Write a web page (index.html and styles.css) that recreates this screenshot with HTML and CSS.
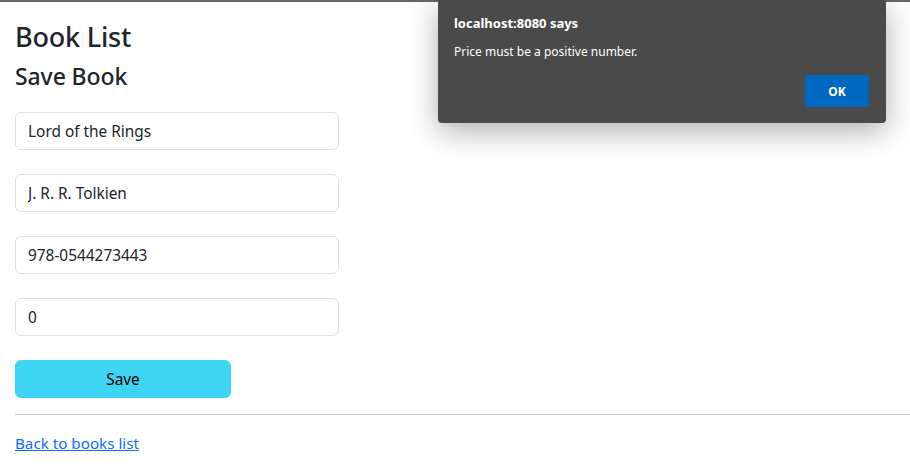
FILE: index.html
```html
<!DOCTYPE html>
<html>
<head>
<meta charset="utf-8">
<link rel="stylesheet" href="styles.css">
</head>
<body>
<div class="topline"></div>
<div class="page">
  <h1 class="title">Book List</h1>
  <h2 class="subtitle">Save Book</h2>
  <form class="form">
    <input class="field" type="text" value="Lord of the Rings">
    <input class="field" type="text" value="J. R. R. Tolkien">
    <input class="field" type="text" value="978-0544273443">
    <input class="field" type="text" value="0">
    <button class="save" type="button">Save</button>
  </form>
  <hr class="rule">
  <a class="back" href="#">Back to books list</a>
</div>
<div class="dialog">
  <div class="dialog-title">localhost:8080 says</div>
  <div class="dialog-msg">Price must be a positive number.</div>
  <div class="dialog-actions"><button class="ok" type="button">OK</button></div>
</div>
</body>
</html>
```
FILE: styles.css
```css
html, body { margin: 0; padding: 0; background: #fff; }
body { font-family: "Noto Sans", "Open Sans", sans-serif; color: #212529; }
.topline { height: 2px; background: #666; }
.page { padding: 0 0 0 15px; display: flex; flex-direction: column; }
.title { font-size: 27px; font-weight: 500; margin: 18px 0 0; line-height: 34px; letter-spacing: -0.2px; }
.subtitle { font-size: 23px; font-weight: 500; margin: 8px 0 0; line-height: 28px; letter-spacing: -0.1px; }
.form { display: flex; flex-direction: column; gap: 24px; margin-top: 22px; align-items: flex-start; }
.field { box-sizing: border-box; width: 324px; height: 38px; border: 1px solid #dee2e6; border-radius: 6px; padding: 0 12px; font: inherit; font-size: 15.4px; color: #212529; }
.save { box-sizing: border-box; width: 216px; height: 38px; border: 1px solid #3dd5f3; background: #3dd5f3; border-radius: 6px; font: inherit; font-size: 15.4px; color: #000; }
.rule { margin: 16px 0 0; border: 0; border-top: 1px solid #c8c8c8; height: 0; }
.back { margin-top: 16px; color: #0d6efd; font-size: 15.2px; line-height: 24px; align-self: flex-start; }
.dialog { position: absolute; left: 438px; top: 0; width: 448px; height: 123px; box-sizing: border-box; background: #4a4a4a; border-radius: 0 0 4px 4px; box-shadow: 0 8px 30px rgba(0,0,0,0.32); padding: 14px 16px 0; color: #fff; font-family: "Noto Sans", sans-serif; }
.dialog-title { font-size: 13px; font-weight: 700; line-height: 18px; }
.dialog-msg { font-size: 12px; line-height: 16px; margin-top: 12px; }
.dialog-actions { display: flex; justify-content: flex-end; margin-top: 15px; padding-right: 1px; }
.ok { width: 64px; height: 32px; border: 0; border-radius: 2px; background: #0067c0; color: #fff; font: inherit; font-size: 12px; font-weight: 700; }
```
